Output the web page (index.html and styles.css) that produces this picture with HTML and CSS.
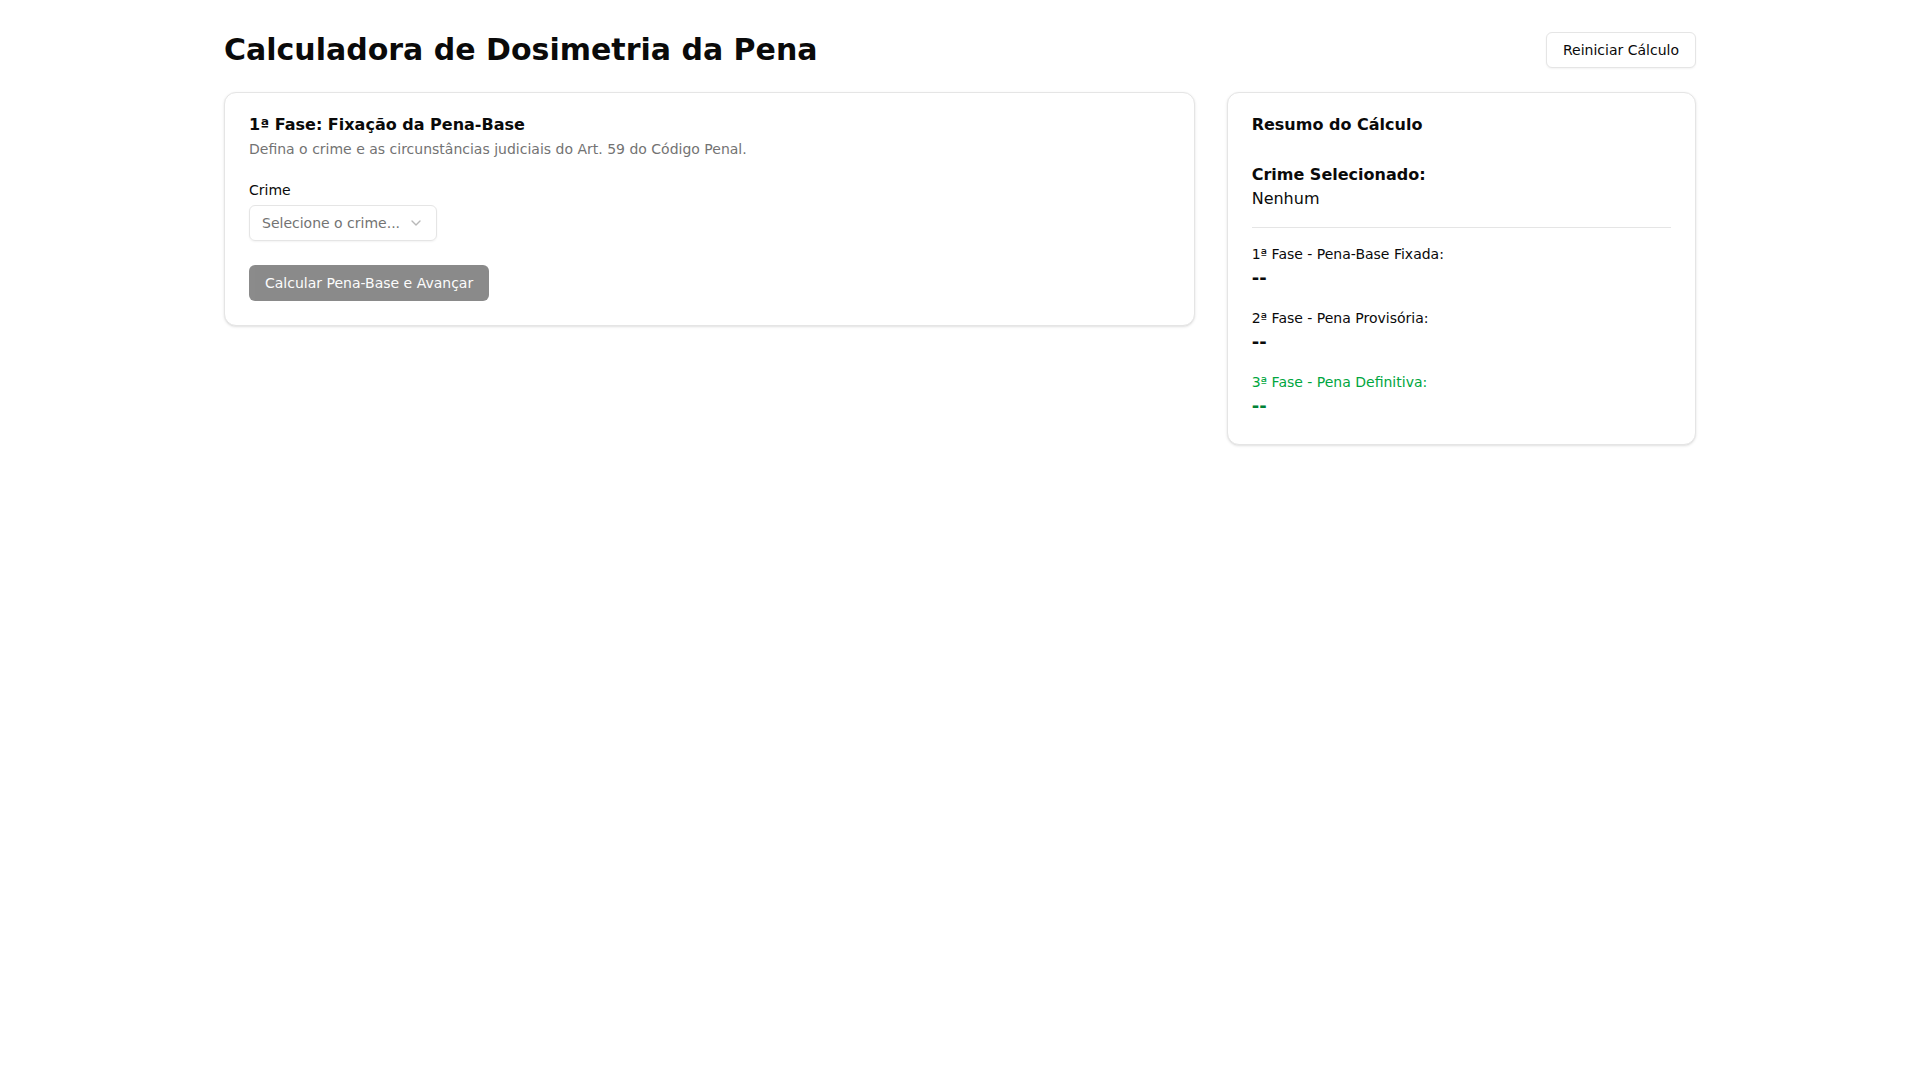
FILE: index.html
```html
<!DOCTYPE html>
<html lang="pt-BR">
<head>
<meta charset="utf-8">
<title>Calculadora de Dosimetria da Pena</title>
<link rel="stylesheet" href="styles.css">
</head>
<body>
<main class="container">
  <header class="page-header">
    <h1 class="page-title">Calculadora de Dosimetria da Pena</h1>
    <button class="btn btn-outline" type="button">Reiniciar Cálculo</button>
  </header>
  <div class="layout">
    <section class="card card-main">
      <div class="card-header">
        <div class="card-title">1ª Fase: Fixação da Pena-Base</div>
        <div class="card-desc">Defina o crime e as circunstâncias judiciais do Art. 59 do Código Penal.</div>
      </div>
      <div class="card-content form">
        <div class="field">
          <label class="label">Crime</label>
          <button class="select" type="button">
            <span class="select-value">Selecione o crime...</span>
            <svg class="chev" viewBox="0 0 24 24" width="16" height="16" fill="none" stroke="currentColor" stroke-width="2" stroke-linecap="round" stroke-linejoin="round"><path d="m6 9 6 6 6-6"/></svg>
          </button>
        </div>
        <div>
          <button class="btn btn-primary" type="button" disabled>Calcular Pena-Base e Avançar</button>
        </div>
      </div>
    </section>
    <aside class="card card-side">
      <div class="card-header">
        <div class="card-title">Resumo do Cálculo</div>
        <div class="card-desc"></div>
      </div>
      <div class="card-content summary">
        <div>
          <div class="sum-strong">Crime Selecionado:</div>
          <div class="sum-text">Nenhum</div>
        </div>
        <div class="sep"></div>
        <div class="phase">
          <div class="phase-label">1ª Fase - Pena-Base Fixada:</div>
          <div class="phase-value">--</div>
        </div>
        <div class="phase">
          <div class="phase-label">2ª Fase - Pena Provisória:</div>
          <div class="phase-value">--</div>
        </div>
        <div class="phase final">
          <div class="phase-label">3ª Fase - Pena Definitiva:</div>
          <div class="phase-value">--</div>
        </div>
      </div>
    </aside>
  </div>
</main>
</body>
</html>
```
FILE: styles.css
```css
* { box-sizing: border-box; }
html, body { margin: 0; padding: 0; background: #ffffff; }
body {
  font-family: "DejaVu Sans", sans-serif;
  color: #0a0a0a;
  font-size: 16px;
  line-height: 24px;
}
.container {
  max-width: 1536px;
  margin: 0 auto;
  padding: 32px;
}
.page-header {
  display: flex;
  align-items: center;
  justify-content: space-between;
  margin-bottom: 24px;
}
.page-title {
  margin: 0;
  font-size: 30px;
  line-height: 36px;
  font-weight: 700;
}
.btn {
  font-family: inherit;
  font-size: 14px;
  line-height: 20px;
  font-weight: 500;
  height: 36px;
  padding: 8px 16px;
  border-radius: 6px;
  cursor: pointer;
  display: inline-flex;
  align-items: center;
  justify-content: center;
  white-space: nowrap;
}
.btn-outline {
  background: #ffffff;
  color: #0a0a0a;
  border: 1px solid #e5e5e5;
  box-shadow: 0 1px 2px rgba(0,0,0,0.05);
}
.btn-primary {
  background: #171717;
  color: #fafafa;
  border: none;
}
.btn-primary:disabled { opacity: 0.5; cursor: default; }
.layout {
  display: grid;
  grid-template-columns: repeat(3, minmax(0, 1fr));
  gap: 32px;
  align-items: start;
}
.card-main { grid-column: span 2; }
.card {
  background: #ffffff;
  border: 1px solid #e5e5e5;
  border-radius: 12px;
  box-shadow: 0 1px 3px rgba(0,0,0,0.1), 0 1px 2px -1px rgba(0,0,0,0.1);
  padding: 24px 0;
  display: flex;
  flex-direction: column;
  gap: 24px;
}
.card-header {
  padding: 0 24px;
  display: grid;
  grid-template-rows: auto auto;
  gap: 6px;
}
.card-title {
  font-size: 16px;
  line-height: 16px;
  font-weight: 700;
}
.card-desc {
  font-size: 14px;
  line-height: 20px;
  color: #737373;
}
.card-content { padding: 0 24px; }
.form { display: flex; flex-direction: column; gap: 24px; }
.field { display: flex; flex-direction: column; gap: 8px; align-items: flex-start; }
.label {
  font-size: 14px;
  line-height: 14px;
  font-weight: 500;
}
.select {
  font-family: inherit;
  height: 36px;
  display: inline-flex;
  align-items: center;
  gap: 8px;
  padding: 8px 12px;
  border: 1px solid #e5e5e5;
  border-radius: 6px;
  background: transparent;
  box-shadow: 0 1px 2px rgba(0,0,0,0.05);
  font-size: 14px;
  line-height: 20px;
  color: #737373;
}
.chev { opacity: 0.5; color: #737373; flex: none; }
.summary { display: flex; flex-direction: column; gap: 16px; }
.sum-strong { font-weight: 700; }
.sep { height: 1px; background: #e5e5e5; }
.phase-label { font-size: 14px; line-height: 20px; font-weight: 500; }
.phase-value { font-size: 18px; line-height: 28px; font-weight: 700; }
.final .phase-label { color: #00a63e; }
.final .phase-value { color: #008236; }
```
